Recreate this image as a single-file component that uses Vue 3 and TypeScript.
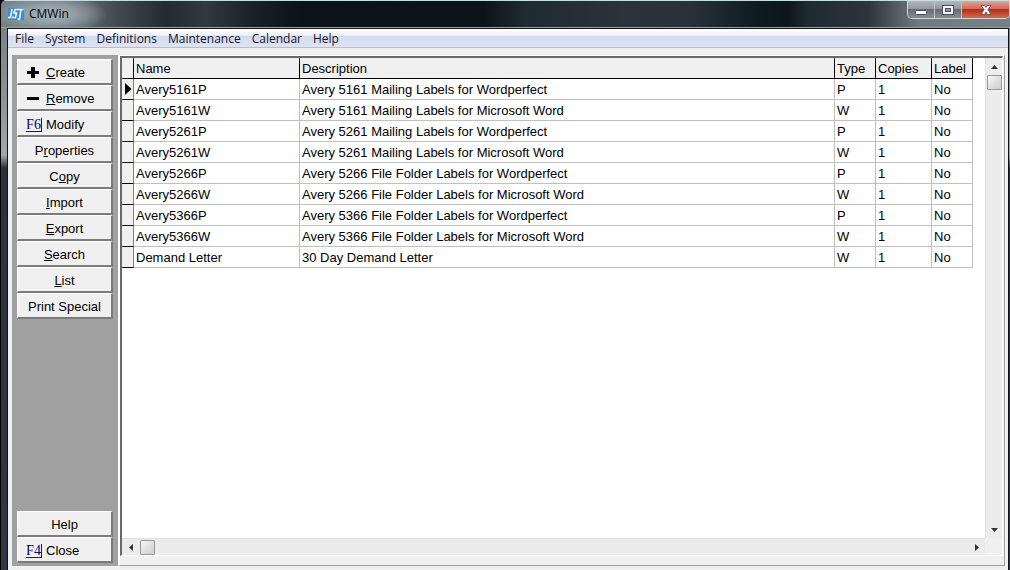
<script setup lang="ts">
import { ref } from 'vue'

interface Action {
  before: string
  key: string
  after: string
  icon?: 'plus' | 'minus'
  badge?: string
}

interface Row {
  name: string
  description: string
  type: string
  copies: number
  label: string
}

const menus: string[] = ['File', 'System', 'Definitions', 'Maintenance', 'Calendar', 'Help']

const actions: Action[] = [
  { before: '', key: 'C', after: 'reate', icon: 'plus' },
  { before: '', key: 'R', after: 'emove', icon: 'minus' },
  { before: 'Modify', key: '', after: '', badge: 'F6' },
  { before: 'P', key: 'r', after: 'operties' },
  { before: 'C', key: 'o', after: 'py' },
  { before: '', key: 'I', after: 'mport' },
  { before: '', key: 'E', after: 'xport' },
  { before: '', key: 'S', after: 'earch' },
  { before: '', key: 'L', after: 'ist' },
  { before: 'Print Special', key: '', after: '' },
]

const labelKinds = [
  { code: '5161', text: 'Mailing Labels' },
  { code: '5261', text: 'Mailing Labels' },
  { code: '5266', text: 'File Folder Labels' },
  { code: '5366', text: 'File Folder Labels' },
]

const targets = [
  { type: 'P', product: 'Wordperfect' },
  { type: 'W', product: 'Microsoft Word' },
]

const rows: Row[] = [
  ...labelKinds.flatMap((kind) =>
    targets.map((target) => ({
      name: `Avery${kind.code}${target.type}`,
      description: `Avery ${kind.code} ${kind.text} for ${target.product}`,
      type: target.type,
      copies: 1,
      label: 'No',
    })),
  ),
  { name: 'Demand Letter', description: '30 Day Demand Letter', type: 'W', copies: 1, label: 'No' },
]

const selected = ref(0)
</script>

<template>
  <div class="window">
    <header class="titlebar">
      <svg class="logo" width="16" height="12" viewBox="0 0 16 12" aria-hidden="true">
        <rect width="16" height="12" fill="#3d8bd0" />
        <path d="M4 1 2.500 9.500H0M10 1.500H7L6 5H8.500L7.500 9.500H4M10 1.500H15.500M13 1.500 11.500 11H9.500" fill="none" stroke="#fff" stroke-width="1.500" />
      </svg>
      <h1 class="title">CMWin</h1>
      <div class="controls">
        <button class="control" type="button" aria-label="Minimize">
          <svg width="14" height="14" viewBox="0 0 14 14"><rect x="1.500" y="7.500" width="11" height="4" rx="1" fill="#fff" stroke="#4b5361" /></svg>
        </button>
        <button class="control" type="button" aria-label="Maximize">
          <svg width="14" height="14" viewBox="0 0 14 14">
            <rect x="1.500" y="2.500" width="11" height="9" fill="#f4f5f7" stroke="#4b5361" />
            <rect x="4.500" y="5.500" width="5" height="3" fill="#8d949d" stroke="#4b5361" />
          </svg>
        </button>
        <button class="control quit" type="button" aria-label="Close window">
          <svg width="14" height="14" viewBox="0 0 14 14"><path d="M2 2.500H5.500L7 4.500 8.500 2.500H12L9 6.500 12 11.500H8.500L7 9 5.500 11.500H2L5 6.500Z" fill="#fff" stroke="#5c3a42" stroke-width="0.800" /></svg>
        </button>
      </div>
    </header>

    <div class="client">
      <nav class="menubar" aria-label="Main menu">
        <button v-for="menu in menus" :key="menu" class="menu" type="button">{{ menu }}</button>
      </nav>

      <main class="body">
        <aside class="sidebar">
          <div class="group">
            <button v-for="action in actions" :key="action.before + action.key + action.after" class="action" :class="{ lead: action.icon || action.badge }" type="button">
              <svg v-if="action.icon" class="glyph" width="16" height="14" viewBox="0 0 16 14" aria-hidden="true">
                <rect x="1" y="5" width="12" height="3" />
                <rect v-if="action.icon === 'plus'" x="5" y="1" width="4" height="11" />
              </svg>
              <span v-if="action.badge" class="badge">{{ action.badge }}</span>
              <span>{{ action.before }}<u>{{ action.key }}</u>{{ action.after }}</span>
            </button>
          </div>
          <div class="group">
            <button class="action" type="button">Help</button>
            <button class="action lead" type="button"><span class="badge">F4</span><span>Close</span></button>
          </div>
        </aside>

        <section class="panel">
          <div class="grid">
            <div class="sheet">
              <table>
                <colgroup>
                  <col class="c-mark" /><col class="c-name" /><col /><col class="c-type" /><col class="c-copies" /><col class="c-label" />
                </colgroup>
                <thead>
                  <tr>
                    <th></th>
                    <th>Name</th>
                    <th>Description</th>
                    <th>Type</th>
                    <th>Copies</th>
                    <th>Label</th>
                  </tr>
                </thead>
                <tbody>
                  <tr v-for="(row, index) in rows" :key="row.name" @click="selected = index">
                    <td class="mark">
                      <svg v-if="index === selected" width="7" height="12" viewBox="0 0 7 12" aria-hidden="true"><path d="M0 0 6.500 6 0 12Z" /></svg>
                    </td>
                    <td>{{ row.name }}</td>
                    <td>{{ row.description }}</td>
                    <td>{{ row.type }}</td>
                    <td>{{ row.copies }}</td>
                    <td>{{ row.label }}</td>
                  </tr>
                </tbody>
              </table>
            </div>
            <div class="bar vertical">
              <button class="arrow" type="button" aria-label="Scroll up"><svg width="7" height="4" viewBox="0 0 7 4"><path d="M0 4 3.500 0 7 4Z" /></svg></button>
              <div class="thumb"></div>
              <button class="arrow end" type="button" aria-label="Scroll down"><svg width="7" height="4" viewBox="0 0 7 4"><path d="M0 0H7L3.500 4Z" /></svg></button>
            </div>
            <div class="bar horizontal">
              <button class="arrow" type="button" aria-label="Scroll left"><svg width="4" height="7" viewBox="0 0 4 7"><path d="M4 0V7L0 3.500Z" /></svg></button>
              <div class="thumb"></div>
              <button class="arrow end" type="button" aria-label="Scroll right"><svg width="4" height="7" viewBox="0 0 4 7"><path d="M0 0V7L4 3.500Z" /></svg></button>
            </div>
            <div class="corner"></div>
          </div>
        </section>
      </main>
    </div>
  </div>
</template>

<style>
body {
  margin: 0;
  background: #000;
}
</style>

<style scoped>
* {
  box-sizing: border-box;
}

button {
  margin: 0;
  padding: 0;
  border: 0;
  background: none;
  color: inherit;
  font: inherit;
}

.window {
  display: flex;
  flex-direction: column;
  height: 100vh;
  overflow: hidden;
  border-left: 1px solid #000;
  border-radius: 6px 0 0 0;
  background: linear-gradient(#777d82 0, #8b8f93 90px, #a5a6a9 155px, #2d303b 168px, #343641 100%);
  color: #000;
  font-family: "Liberation Sans", Arial, sans-serif;
  font-size: 13px;
}

.titlebar {
  display: flex;
  align-items: flex-start;
  flex: none;
  height: 28px;
  padding-left: 7px;
  border-top: 1px solid #c6dde3;
  border-bottom: 1px solid #9a9fa3;
  background:
    radial-gradient(ellipse 58px 20px at 48px 13px, #a9b4bc 0, #929da5 45%, transparent 100%),
    linear-gradient(90deg, #757e85 0, #626a70 80px, #3e474d 120px, #232b32 165px, #303840 205px, #192129 250px, #0b131a 300px, #0c141b 48%, #202a31 52%, #2b333b 62%, #29323a 68%, #101a21 75%, #0d161d 78%, #202a31 80%, #2c343c 86%, #737b82 91%, #777f86 100%);
}

.logo {
  margin-top: 7px;
}

.title {
  flex: 1;
  margin: 0 0 0 5px;
  font: 12px/26px "Open Sans", "Noto Sans", sans-serif;
}

.controls {
  display: flex;
  height: 18px;
  border: 1px solid #d0d5d8;
  border-top: 0;
  border-radius: 0 0 5px 5px;
  overflow: hidden;
}

.control {
  display: flex;
  align-items: center;
  justify-content: center;
  width: 27px;
  border-right: 1px solid #c0c5ca;
  background: linear-gradient(#b4b8bc 0, #9298a0 45%, #666d77 50%, #858d96 100%);
}

.control.quit {
  width: 47px;
  border-right: 0;
  background: linear-gradient(#dfa69a 0, #cf6c58 45%, #b52f1a 50%, #d06c4a 100%);
}

.client {
  display: flex;
  flex: 1;
  flex-direction: column;
  min-height: 0;
  margin: 0 1px 0 6px;
  border: solid #111219;
  border-width: 1px 1px 0;
  background: #f0f0f0;
}

.menubar {
  display: flex;
  flex: none;
  gap: 11px;
  height: 19px;
  padding-left: 7px;
  border-bottom: 1px solid #b9bccf;
  background: linear-gradient(#fff 0, #edf0f8 35%, #d5dbed 40%, #dfe3f4 100%);
  color: #16162a;
  font: 12px/20px "Open Sans", "Noto Sans", sans-serif;
}

.body {
  display: flex;
  flex: 1;
  min-height: 0;
  padding: 7px 3px 4px 4px;
}

.sidebar {
  display: flex;
  flex: none;
  flex-direction: column;
  justify-content: space-between;
  width: 106px;
  padding: 4px 5px 3px 5px;
  background: #a0a0a0;
}

.group {
  display: flex;
  flex-direction: column;
}

.action {
  display: flex;
  align-items: center;
  justify-content: center;
  height: 26px;
  padding-top: 2px;
  border: solid;
  border-width: 1px 2px 2px 1px;
  border-color: #fff #7b7b7b #7b7b7b #fff;
  background: #f0f0f0;
}

.action.lead {
  justify-content: flex-start;
  gap: 4px;
  padding-left: 8px;
}

.glyph {
  flex: none;
}

.badge {
  width: 16px;
  height: 14px;
  border: solid #222;
  border-width: 0 1px 1px 0;
  color: #000080;
  font: 14px/13px "Liberation Serif", "Times New Roman", serif;
}

.panel {
  flex: 1;
  min-width: 0;
  padding: 0 1px 9px 0;
  border: 1px solid #a0a0a0;
  border-top-color: #fff;
  border-left: 2px solid #fff;
}

.grid {
  display: grid;
  grid-template-rows: minmax(0, 1fr) 17px;
  grid-template-columns: minmax(0, 1fr) 17px;
  height: 100%;
  border: solid;
  border-width: 2px 1px 1px 2px;
  border-color: #696969 #fff #fff #696969;
}

.sheet {
  overflow: hidden;
  padding-right: 12px;
  background: #fff;
}

table {
  width: 100%;
  table-layout: fixed;
  border-collapse: separate;
  border-spacing: 0;
}

.c-mark { width: 12px; }
.c-name { width: 166px; }
.c-type { width: 41px; }
.c-copies { width: 56px; }
.c-label { width: 41px; }

th,
td {
  height: 21px;
  padding: 2px 0 0 2px;
  overflow: hidden;
  border: solid #c0c0c0;
  border-width: 0 1px 1px 0;
  font-weight: 400;
  line-height: 18px;
  text-align: left;
  white-space: nowrap;
}

th {
  border-color: #000;
  background: #f0f0f0;
}

td.mark,
th:first-child {
  padding: 0 0 0 3px;
}

td.mark {
  border-color: #808080 #808080 #000;
  background: #f0f0f0;
}

.mark svg {
  display: block;
}

.bar {
  display: flex;
  align-items: center;
  background: #ececec;
}

.vertical {
  flex-direction: column;
  border-left: 1px solid #e0e0e0;
}

.horizontal {
  border-top: 1px solid #e0e0e0;
}

.corner {
  background: #f0f0f0;
}

.arrow {
  display: flex;
  align-items: center;
  justify-content: center;
  flex: none;
  width: 17px;
  height: 17px;
  fill: #333;
}

.arrow.end {
  margin-top: auto;
}

.horizontal .arrow.end {
  margin: 0 0 0 auto;
}

.thumb {
  width: 15px;
  height: 15px;
  border: 1px solid #999;
  border-radius: 1px;
  background: linear-gradient(135deg, #f8f8f8, #dcdcdc 60%, #cfcfcf);
}

.horizontal .thumb {
  margin-left: 1px;
}
</style>
